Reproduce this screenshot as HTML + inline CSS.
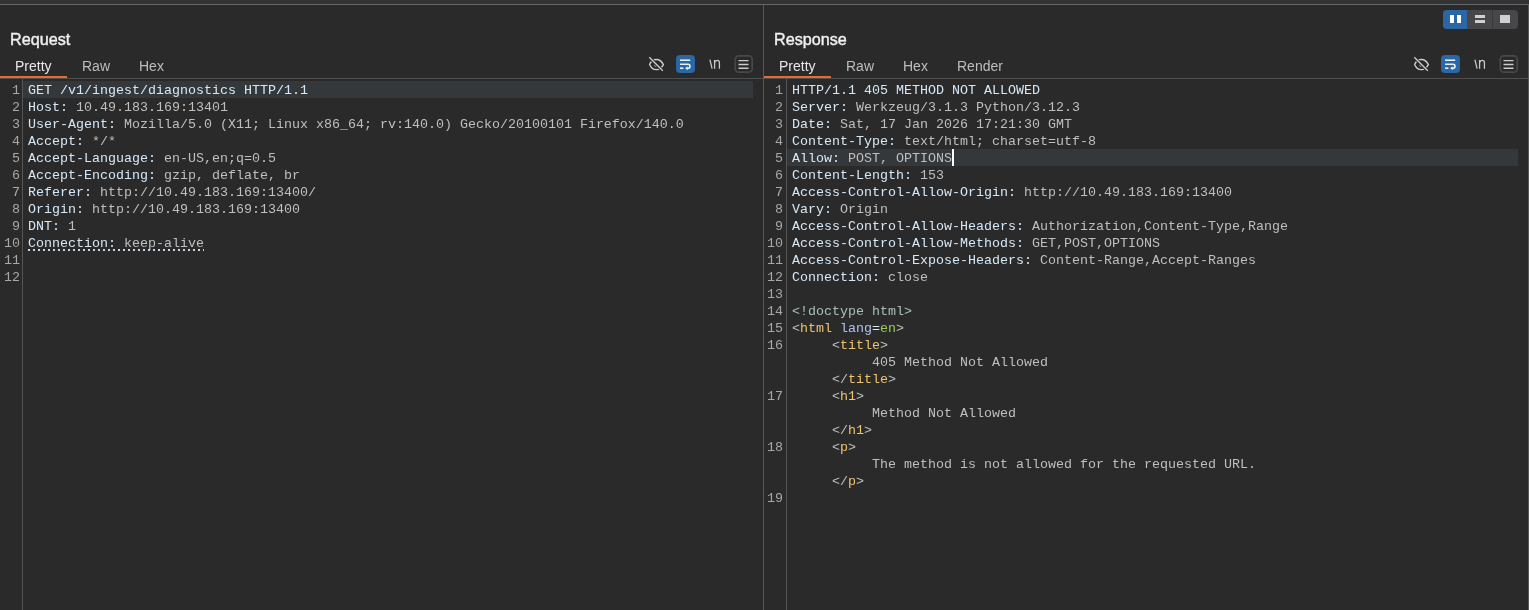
<!DOCTYPE html>
<html><head><meta charset="utf-8">
<style>
*{margin:0;padding:0;box-sizing:border-box}
html,body{width:1529px;height:610px;overflow:hidden;background:#2a2a2a;font-family:"Liberation Sans",sans-serif;-webkit-font-smoothing:antialiased}
.abs{position:absolute}
#root{position:absolute;left:0;top:0;width:1529px;height:610px;will-change:transform}
#topband{left:0;top:0;width:1529px;height:4px;background:#323335}
#topline{left:0;top:4px;width:1529px;height:1px;background:#676767}
#rborder{left:1528px;top:4px;width:1px;height:606px;background:#5a5a5a}
#vsep{left:763px;top:5px;width:1px;height:605px;background:#575757}
.title{font-size:17.4px;font-weight:normal;-webkit-text-stroke:0.45px #f0f0f0;color:#f0f0f0;top:29px;line-height:20px;transform:scaleX(0.93);transform-origin:0 0}
.tab{font-size:14px;color:#bdbdbd;top:58px;line-height:17px}
.tab.sel{color:#e8e8e8}
.uline{top:76px;height:2px;background:#e36c34}
.hline{top:78px;height:1px;background:#4f4f4f}
.gsep{top:79px;width:1px;height:531px;background:#555555}
.hl{top:81px;height:17px;background:#34383b}
.ln{position:absolute;margin-top:1px;font-family:"Liberation Mono",monospace;font-size:13.33px;color:#a8a8a8;text-align:right;line-height:17px}
.code{position:absolute;margin-top:1px;font-family:"Liberation Mono",monospace;font-size:13.33px;line-height:17px;white-space:pre;color:#bfbfbf}
.k{color:#d5e8f7}
.v{color:#c4c4c4}
.tg{color:#eec46c}
.an{color:#b0c0f0}
.av{color:#9cc95a}
.dt{color:#a7c0b8}
.dot{left:28px;top:249px;width:176px;height:2px;background:repeating-linear-gradient(to right,#c6d8e8 0 2px,transparent 2px 5px)}
.caret{display:inline-block;width:2px;height:17px;background:#fff;vertical-align:top;position:relative;top:-1px}
</style></head><body><div id="root">
<div class="abs" id="topband"></div>
<div class="abs" id="topline"></div>
<div class="abs" id="vsep"></div>
<div class="abs" id="rborder"></div>

<!-- layout buttons -->
<div class="abs" style="left:1443px;top:10px;width:75px;height:19px;border-radius:4px;overflow:hidden;background:#474749">
  <div class="abs" style="left:0;top:0;width:24px;height:19px;background:#2a67a4"></div>
  <div class="abs" style="left:7px;top:5px;width:4px;height:8px;background:#fff"></div>
  <div class="abs" style="left:14px;top:5px;width:4px;height:8px;background:#fff"></div>
  <div class="abs" style="left:49px;top:0;width:1px;height:19px;background:#38383a"></div>
  <div class="abs" style="left:32px;top:5px;width:10px;height:3px;background:#d0d0d0"></div>
  <div class="abs" style="left:32px;top:10px;width:10px;height:3px;background:#d0d0d0"></div>
  <div class="abs" style="left:57px;top:5px;width:10px;height:8px;background:#d0d0d0"></div>
</div>

<!-- LEFT PANE -->
<div class="abs title" style="left:10px">Request</div>
<div class="abs tab sel" style="left:15px">Pretty</div>
<div class="abs tab" style="left:82px">Raw</div>
<div class="abs tab" style="left:139px">Hex</div>
<div class="abs uline" style="left:0;width:67px"></div>
<div class="abs hline" style="left:0;width:763px"></div>
<div class="abs gsep" style="left:22px"></div>
<div class="abs hl" style="left:23px;width:730px"></div>

<div class="code" style="left:28px;top:81px"><span class="k">GET /v1/ingest/diagnostics HTTP/1.1</span>
<span class="k">Host:</span> 10.49.183.169:13401
<span class="k">User-Agent:</span> Mozilla/5.0 (X11; Linux x86_64; rv:140.0) Gecko/20100101 Firefox/140.0
<span class="k">Accept:</span> */*
<span class="k">Accept-Language:</span> en-US,en;q=0.5
<span class="k">Accept-Encoding:</span> gzip, deflate, br
<span class="k">Referer:</span> http://10.49.183.169:13400/
<span class="k">Origin:</span> http://10.49.183.169:13400
<span class="k">DNT:</span> 1
<span class="k">Connection:</span> keep-alive
</div>
<div class="abs dot"></div>
<div class="ln" style="left:0;top:81px;width:20px">1<br>2<br>3<br>4<br>5<br>6<br>7<br>8<br>9<br>10<br>11<br>12</div>

<svg class="abs" style="left:644px;top:50px" width="116" height="28" viewBox="644 50 116 28">
  <g fill="none" stroke="#cfcfcf" stroke-width="1.3">
    <path d="M649.6 64.6 C651.5 59.8 655 59.5 656.4 59.5 C659 59.5 661.8 61.5 663.4 64.6 C661.8 67.7 659 69.7 656.4 69.7 C655 69.7 651.5 69.4 649.6 64.6 Z"/>
    <circle cx="656" cy="65" r="1"/>
    <path d="M649.3 57.3 L662.8 70.8" stroke="#2a2a2a" stroke-width="3.2"/>
    <path d="M649.3 57.3 L662.8 70.8"/>
  </g>
  <rect x="676" y="55" width="19" height="18" rx="4" fill="#2a67a6"/>
  <g fill="none" stroke="#e8eef6" stroke-width="1.6">
    <path d="M680 60.2 H690.2"/>
    <path d="M680 64.2 H688 A2 2 0 0 1 688 68.2 H686.5"/>
    <path d="M680 68.2 H683.4"/>
  </g>
  <path d="M685.2 68.2 L687.6 66.2 L687.6 70.2 Z" fill="#e8eef6"/>
  <path d="M709.9 59.6 L712.1 68.6 M714.6 60.1 V68.7 M714.6 62.6 Q715.4 60.3 717.3 60.3 Q719.4 60.3 719.4 62.6 V68.7" fill="none" stroke="#c8c8c8" stroke-width="1.3"/>
  <rect x="735.3" y="55.8" width="16.9" height="16.4" rx="3.5" fill="none" stroke="#48484a" stroke-width="1.7"/>
  <g stroke="#cacaca" stroke-width="1.4">
    <path d="M738.5 60.6 H748.5 M738.5 64.5 H748.5 M738.5 68.3 H748.5"/>
  </g>
</svg>
<!-- RIGHT PANE -->
<div class="abs title" style="left:774px">Response</div>
<div class="abs tab sel" style="left:779px">Pretty</div>
<div class="abs tab" style="left:846px">Raw</div>
<div class="abs tab" style="left:903px">Hex</div>
<div class="abs tab" style="left:957px">Render</div>
<div class="abs uline" style="left:764px;width:67px"></div>
<div class="abs hline" style="left:764px;width:764px"></div>
<div class="abs gsep" style="left:786px"></div>
<div class="abs hl" style="left:787px;top:149px;width:731px"></div>

<div class="code" style="left:792px;top:81px"><span class="k">HTTP/1.1 405 METHOD NOT ALLOWED</span>
<span class="k">Server:</span> Werkzeug/3.1.3 Python/3.12.3
<span class="k">Date:</span> Sat, 17 Jan 2026 17:21:30 GMT
<span class="k">Content-Type:</span> text/html; charset=utf-8
<span class="k">Allow:</span> POST, OPTIONS<span class="caret"></span>
<span class="k">Content-Length:</span> 153
<span class="k">Access-Control-Allow-Origin:</span> http://10.49.183.169:13400
<span class="k">Vary:</span> Origin
<span class="k">Access-Control-Allow-Headers:</span> Authorization,Content-Type,Range
<span class="k">Access-Control-Allow-Methods:</span> GET,POST,OPTIONS
<span class="k">Access-Control-Expose-Headers:</span> Content-Range,Accept-Ranges
<span class="k">Connection:</span> close

<span class="dt">&lt;!doctype html&gt;</span>
&lt;<span class="tg">html</span> <span class="an">lang</span><span class="k">=</span><span class="av">en</span>&gt;
     &lt;<span class="tg">title</span>&gt;
          405 Method Not Allowed
     &lt;/<span class="tg">title</span>&gt;
     &lt;<span class="tg">h1</span>&gt;
          Method Not Allowed
     &lt;/<span class="tg">h1</span>&gt;
     &lt;<span class="tg">p</span>&gt;
          The method is not allowed for the requested URL.
     &lt;/<span class="tg">p</span>&gt;
</div>
<div class="ln" style="left:763px;top:81px;width:20px">1<br>2<br>3<br>4<br>5<br>6<br>7<br>8<br>9<br>10<br>11<br>12<br>13<br>14<br>15<br>16<br><br><br>17<br><br><br>18<br><br><br>19</div>
<svg class="abs" style="left:1409px;top:50px" width="116" height="28" viewBox="644 50 116 28">
  <g fill="none" stroke="#cfcfcf" stroke-width="1.3">
    <path d="M649.6 64.6 C651.5 59.8 655 59.5 656.4 59.5 C659 59.5 661.8 61.5 663.4 64.6 C661.8 67.7 659 69.7 656.4 69.7 C655 69.7 651.5 69.4 649.6 64.6 Z"/>
    <circle cx="656" cy="65" r="1"/>
    <path d="M649.3 57.3 L662.8 70.8" stroke="#2a2a2a" stroke-width="3.2"/>
    <path d="M649.3 57.3 L662.8 70.8"/>
  </g>
  <rect x="676" y="55" width="19" height="18" rx="4" fill="#2a67a6"/>
  <g fill="none" stroke="#e8eef6" stroke-width="1.6">
    <path d="M680 60.2 H690.2"/>
    <path d="M680 64.2 H688 A2 2 0 0 1 688 68.2 H686.5"/>
    <path d="M680 68.2 H683.4"/>
  </g>
  <path d="M685.2 68.2 L687.6 66.2 L687.6 70.2 Z" fill="#e8eef6"/>
  <path d="M709.9 59.6 L712.1 68.6 M714.6 60.1 V68.7 M714.6 62.6 Q715.4 60.3 717.3 60.3 Q719.4 60.3 719.4 62.6 V68.7" fill="none" stroke="#c8c8c8" stroke-width="1.3"/>
  <rect x="735.3" y="55.8" width="16.9" height="16.4" rx="3.5" fill="none" stroke="#48484a" stroke-width="1.7"/>
  <g stroke="#cacaca" stroke-width="1.4">
    <path d="M738.5 60.6 H748.5 M738.5 64.5 H748.5 M738.5 68.3 H748.5"/>
  </g>
</svg>
</div></body></html>
